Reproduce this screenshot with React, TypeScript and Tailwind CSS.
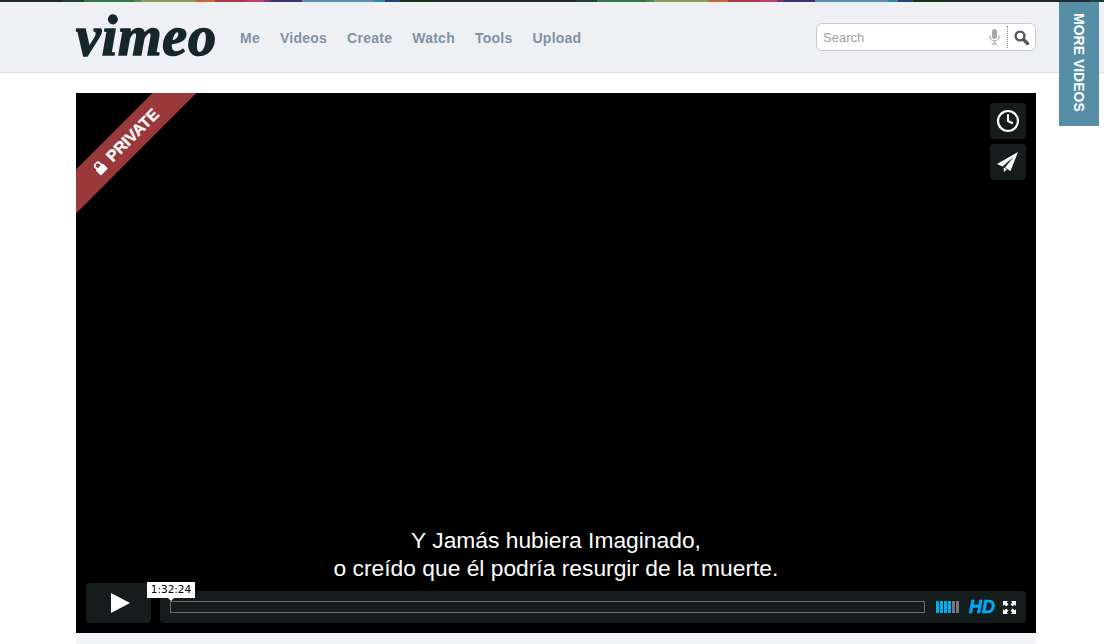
import { Clock } from "lucide-react";

const stripe = [
  "w-[63px] bg-[#1a2a2e]",
  "w-[21px] bg-[#1f4034]",
  "w-[50px] bg-[#35794a]",
  "w-[7px] bg-[#4a8a55]",
  "w-[54px] bg-[#8a9e5c]",
  "w-[20px] bg-[#c06a3a]",
  "w-[32px] bg-[#a83c4a]",
  "w-[17px] bg-[#c0406f]",
  "w-[7px] bg-[#6a3a70]",
  "w-[31px] bg-[#40306a]",
  "w-[73px] bg-[#5a90a8]",
  "w-[10px] bg-[#2a88a0]",
  "w-[15px] bg-[#25407a]",
  "w-[30px] bg-[#15300f]",
  "w-[83px] bg-[#1a2a2e]",
];

const navItems = ["Me", "Videos", "Create", "Watch", "Tools", "Upload"];

export default function App() {
  return (
    <div className="relative h-[644px] overflow-hidden bg-white font-['Liberation_Sans',sans-serif]">
      <div className="flex h-[2px] w-[1104px]">
        {[0, 1, 2].map((n) => (
          <div key={n} className="flex shrink-0">
            {stripe.map((s, i) => (
              <div key={i} className={s} />
            ))}
          </div>
        ))}
      </div>

      <header className="flex h-[71px] items-center border-b border-[#dcdde1] bg-[#eff0f4] pl-[76px] pr-[68px]">
        <span className="w-[141px] pb-[3px] font-['Liberation_Serif',serif] text-[56px] font-bold italic leading-none tracking-[0.8px] text-[#16272a] [-webkit-text-stroke:1.6px_#16272a]">
          vimeo
        </span>
        <nav className="ml-[23px] flex gap-5 pt-[2px] text-sm font-bold tracking-[0.25px] text-[#7f93a3]">
          {navItems.map((item) => (
            <a key={item}>{item}</a>
          ))}
        </nav>
        <div className="ml-auto flex h-[28px] w-[220px] items-center rounded-md border border-[#c9c9cd] bg-white pl-[6px] pr-[5px]">
          <span className="flex-1 pt-px text-[13px] text-[#a0a0a0]">Search</span>
          <svg width="11" height="16" viewBox="0 0 11 16" fill="#a8a8a8">
            <rect x="3" y="0" width="5" height="10" rx="2.5" />
            <path d="M1 6.5 V7.5 A4.5 4.5 0 0 0 10 7.5 V6.5" fill="none" stroke="#a8a8a8" strokeWidth="1.2" />
            <rect x="5" y="11.5" width="1.2" height="3" />
            <rect x="3" y="14.5" width="5" height="1.2" />
          </svg>
          <div className="ml-[7px] mr-[6px] h-[22px] border-l border-dotted border-[#888]" />
          <svg className="mr-px" width="15" height="15" viewBox="0 0 15 15" fill="none" stroke="#55555a">
            <circle cx="6" cy="6" r="4.4" strokeWidth="2.4" />
            <path d="M9.5 9.5 L13.5 13.5" strokeWidth="3.2" strokeLinecap="round" />
          </svg>
        </div>
      </header>

      <main className="pl-[76px] pt-5">
        <div className="w-[960px] bg-[#f3f4f7] pb-3">
          <div className="relative h-[540px] overflow-hidden bg-black">
            <div className="absolute left-[-51px] top-[34px] flex h-[31px] w-[200px] -rotate-45 items-center justify-center gap-[7px] bg-[#9a383c] pl-[3px] text-[16px] font-bold text-white [-webkit-text-stroke:0.3px_white]">
              <svg width="11" height="13" viewBox="0 0 11 13" fill="white">
                <path d="M2.5 6 V3.5 A3 3 0 0 1 8.5 3.5 V6" fill="none" stroke="white" strokeWidth="1.8" />
                <rect x="0.5" y="5.5" width="10" height="7.5" rx="1" />
              </svg>
              PRIVATE
            </div>

            <div className="absolute right-[10px] top-[10px] flex flex-col gap-[5px]">
              <div className="flex h-9 w-9 items-center justify-center rounded bg-[#141c1c]">
                <Clock size={24} strokeWidth={2.2} className="text-white" />
              </div>
              <div className="flex h-9 w-9 items-center justify-center rounded bg-[#141c1c]">
                <svg width="22" height="21" viewBox="0 0 22 21" fill="white">
                  <path d="M21 0 L0 12 L5.5 14.5 L17 4.5 L8 15.5 L8 15.6 L13.5 19 Z" />
                  <path d="M6.5 15.5 L7 20 L10 17.3 Z" />
                </svg>
              </div>
            </div>

            <div className="absolute bottom-[51px] left-0 right-0 text-center text-[22.8px] leading-[28px] text-white">
              <p>Y Jamás hubiera Imaginado,</p>
              <p>o creído que él podría resurgir de la muerte.</p>
            </div>

            <div className="absolute bottom-[10px] left-[10px] right-[10px] flex items-end gap-[9px]">
              <div className="flex h-10 w-[65px] items-center justify-center rounded bg-[#141c1c] pl-[3px]">
                <svg width="19" height="20" viewBox="0 0 19 20" fill="white">
                  <path d="M0 0 L19 10 L0 20 Z" />
                </svg>
              </div>
              <div className="flex h-8 flex-1 items-center rounded bg-[#141c1c] pl-[10px] pr-[10px]">
                <div className="h-3 flex-1 border border-[#6b6f6f]" />
                <div className="ml-[11px] flex h-3 gap-px">
                  <div className="w-[3px] bg-[#00adef]" />
                  <div className="w-[3px] bg-[#00adef]" />
                  <div className="w-[3px] bg-[#00adef]" />
                  <div className="w-[3px] bg-[#00adef]" />
                  <div className="w-[3px] bg-[#777]" />
                  <div className="w-[3px] bg-[#777]" />
                </div>
                <span className="ml-[10px] text-[18px] font-bold italic leading-none text-[#00adef] [-webkit-text-stroke:0.5px_#00adef]">HD</span>
                <svg className="ml-[8px]" width="13" height="13" viewBox="0 0 13 13" fill="white">
                  <path d="M0 0 H5 L3.6 1.4 L5.4 3.2 L3.2 5.4 L1.4 3.6 L0 5 Z" />
                  <path d="M13 0 V5 L11.6 3.6 L9.8 5.4 L7.6 3.2 L9.4 1.4 L8 0 Z" />
                  <path d="M0 13 V8 L1.4 9.4 L3.2 7.6 L5.4 9.8 L3.6 11.6 L5 13 Z" />
                  <path d="M13 13 H8 L9.4 11.6 L7.6 9.8 L9.8 7.6 L11.6 9.4 L13 8 Z" />
                </svg>
              </div>
            </div>

            <div className="absolute left-[71px] top-[489px] flex h-4 w-[48px] items-center justify-center bg-white font-['DejaVu_Sans',sans-serif] text-[10.5px] text-black">
              1:32:24
              <div className="absolute left-[21px] top-4 h-0 w-0 border-x-[3px] border-t-[3px] border-x-transparent border-t-white" />
            </div>
          </div>
        </div>
      </main>

      <div className="absolute left-[1059px] top-[2px] flex h-[124px] w-10 items-center justify-start bg-[#568ea6] pt-[11px] text-sm font-bold text-white [writing-mode:vertical-rl]">
        <span className="leading-[38px]">MORE VIDEOS</span>
      </div>
    </div>
  );
}
